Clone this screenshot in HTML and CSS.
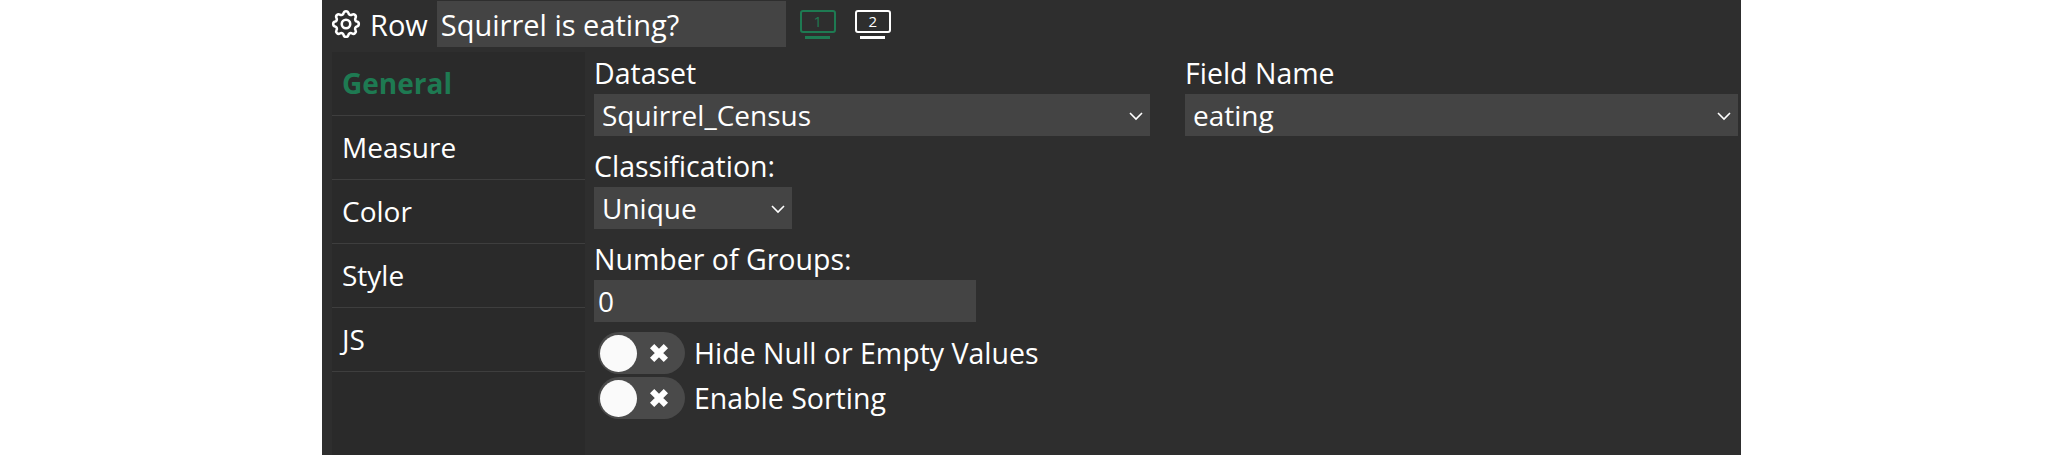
FILE: index.html
```html
<!DOCTYPE html>
<html lang="en">
<head>
  <meta charset="UTF-8" />
  <title>Row settings</title>
  <link rel="stylesheet" href="styles.css">
</head>
<body>

  <div class="panel">
    <div class="title-bar">
      <svg class="gear" viewBox="0 0 24 24" fill="none" stroke="#fff" stroke-width="1.8" stroke-linecap="round" stroke-linejoin="round">
        <path d="M10.3 4.3c.4-1.8 3-1.8 3.4 0a1.7 1.7 0 0 0 2.6 1.1c1.5-.9 3.3.8 2.4 2.4a1.7 1.7 0 0 0 1 2.5c1.8.4 1.8 3 0 3.4a1.7 1.7 0 0 0-1 2.6c.9 1.5-.9 3.3-2.4 2.4a1.7 1.7 0 0 0-2.6 1c-.4 1.8-3 1.8-3.4 0a1.7 1.7 0 0 0-2.6-1c-1.5.9-3.3-.9-2.4-2.4a1.7 1.7 0 0 0-1-2.6c-1.8-.4-1.8-3 0-3.4a1.7 1.7 0 0 0 1-2.5c-.9-1.6.9-3.3 2.4-2.4a1.7 1.7 0 0 0 2.6-1.1z"/>
        <circle cx="12" cy="12" r="3"/>
      </svg>
      <span class="title-label">Row</span>
      <input class="title-input" type="text" value="Squirrel is eating?" />
      <div class="screens">
        <div class="screen active"><span class="screen-box">1</span><span class="screen-stand"></span></div>
        <div class="screen"><span class="screen-box">2</span><span class="screen-stand"></span></div>
      </div>
    </div>

    <div class="body-row">
      <ul class="side-nav">
        <li class="active">General</li>
        <li>Measure</li>
        <li>Color</li>
        <li>Style</li>
        <li>JS</li>
      </ul>

      <div class="form">
        <div class="two-col">
          <div class="col">
            <label>Dataset</label>
            <div class="select-wrap">
              <select><option>Squirrel_Census</option></select>
              <svg class="chevron" viewBox="0 0 16 10"><path d="M2 2l6 6 6-6" fill="none" stroke="#fff" stroke-width="1.6"/></svg>
            </div>
          </div>
          <div class="col">
            <label>Field Name</label>
            <div class="select-wrap">
              <select><option>eating</option></select>
              <svg class="chevron" viewBox="0 0 16 10"><path d="M2 2l6 6 6-6" fill="none" stroke="#fff" stroke-width="1.6"/></svg>
            </div>
          </div>
        </div>

        <label>Classification:</label>
        <div class="select-wrap small">
          <select><option>Unique</option></select>
          <svg class="chevron" viewBox="0 0 16 10"><path d="M2 2l6 6 6-6" fill="none" stroke="#fff" stroke-width="1.6"/></svg>
        </div>

        <label>Number of Groups:</label>
        <input class="num-input" type="text" value="0" />

        <div class="toggle-row">
          <span class="toggle">
            <span class="knob"></span>
            <svg class="cross" viewBox="0 0 16 16"><path d="M3 3l10 10M13 3L3 13" stroke="#fff" stroke-width="4.4"/></svg>
          </span>
          <span>Hide Null or Empty Values</span>
        </div>
        <div class="toggle-row">
          <span class="toggle">
            <span class="knob"></span>
            <svg class="cross" viewBox="0 0 16 16"><path d="M3 3l10 10M13 3L3 13" stroke="#fff" stroke-width="4.4"/></svg>
          </span>
          <span>Enable Sorting</span>
        </div>
      </div>
    </div>
  </div>

</body>
</html>
```

FILE: styles.css
```css
* { box-sizing: border-box; }
body {
  margin: 0;
  background: #fff;
  font-family: "Open Sans", sans-serif;
  font-size: 28.5px;
  color: #fff;
}
.panel {
  width: 1419px;
  height: 455px;
  margin-left: 322px;
  padding-left: 10px;
  padding-top: 1px;
  background: #2e2e2e;
  overflow: hidden;
}
.title-bar {
  display: flex;
  align-items: center;
  height: 46px;
}
.gear {
  width: 34px;
  height: 34px;
  margin-left: -3px;
  margin-right: 7px;
}
.title-label {
  margin-right: 9px;
  font-size: 29px;
}
.title-input {
  width: 349px;
  height: 46px;
  padding: 0 4px;
  border: 0;
  background: #444;
  color: #fff;
  font: inherit;
  font-size: 29px;
}
.screens {
  display: flex;
  gap: 19px;
  margin-left: 14px;
}
.screen {
  display: flex;
  flex-direction: column;
  align-items: center;
  width: 36px;
  color: #fff;
}
.screen-box {
  width: 36px;
  height: 23px;
  border: 2px solid currentColor;
  border-radius: 3px;
  font-size: 15px;
  line-height: 18px;
  text-align: center;
}
.screen-stand {
  width: 25px;
  height: 3px;
  margin-top: 3px;
  background: currentColor;
}
.screen.active { color: #1e7a52; }

.body-row {
  display: flex;
  margin-top: 5px;
}
.side-nav {
  width: 253px;
  height: 403px;
  margin: 0;
  padding: 0;
  list-style: none;
  background: #2a2a2a;
  font-size: 28px;
}
.side-nav li {
  height: 64px;
  padding: 0 10px;
  border-bottom: 1px solid #3e3e3e;
  line-height: 63px;
}
.side-nav li.active {
  color: #1e7a52;
  font-weight: 700;
}
.form {
  flex: 1;
  padding: 4px 3px 0 9px;
}
.form label {
  display: block;
  height: 36px;
  line-height: 34px;
}
.form label + .select-wrap,
.form label + .num-input { margin-top: 2px; }
.two-col {
  display: flex;
  gap: 35px;
}
.two-col .col:first-child { width: 556px; }
.two-col .col:last-child { width: 553px; }
.select-wrap {
  position: relative;
  height: 42px;
  margin-bottom: 13px;
}
.select-wrap.small { width: 198px; }
.select-wrap select {
  width: 100%;
  height: 100%;
  padding: 0 8px;
  border: 0;
  border-radius: 0;
  appearance: none;
  background: #444;
  color: #fff;
  font: inherit;
  font-size: 28px;
}
.chevron {
  position: absolute;
  top: 17px;
  right: 6px;
  width: 16px;
  height: 10px;
}
.num-input {
  display: block;
  width: 382px;
  height: 42px;
  padding: 0 4px;
  border: 0;
  background: #444;
  color: #fff;
  font: inherit;
  font-size: 28px;
}
.toggle-row {
  display: flex;
  align-items: center;
  height: 45px;
  padding-left: 4px;
  gap: 9px;
}
.num-input + .toggle-row { margin-top: 8px; }
.toggle {
  position: relative;
  display: block;
  width: 87px;
  height: 42px;
  border-radius: 21px;
  background: #4a4a4a;
}
.knob {
  position: absolute;
  left: 2px;
  top: 3px;
  width: 37px;
  height: 37px;
  border-radius: 50%;
  background: #fafafa;
}
.cross {
  position: absolute;
  left: 50px;
  top: 10px;
  width: 22px;
  height: 22px;
}
```
